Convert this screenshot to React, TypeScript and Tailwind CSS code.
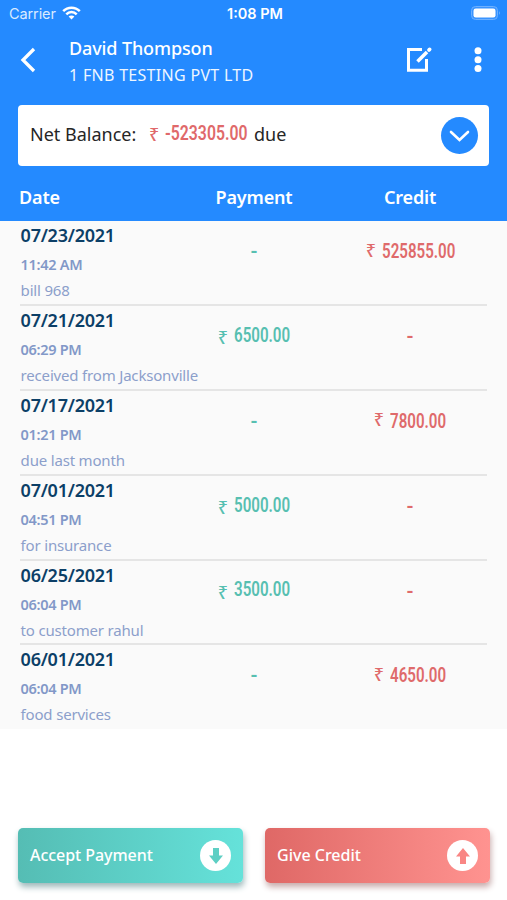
interface Entry {
  date: string;
  time: string;
  note: string;
  payment?: string;
  credit?: string;
}

const entries: Entry[] = [
  { date: '07/23/2021', time: '11:42 AM', note: 'bill 968', credit: '525855.00' },
  { date: '07/21/2021', time: '06:29 PM', note: 'received from Jacksonville', payment: '6500.00' },
  { date: '07/17/2021', time: '01:21 PM', note: 'due last month', credit: '7800.00' },
  { date: '07/01/2021', time: '04:51 PM', note: 'for insurance', payment: '5000.00' },
  { date: '06/25/2021', time: '06:04 PM', note: 'to customer rahul', payment: '3500.00' },
  { date: '06/01/2021', time: '06:04 PM', note: 'food services', credit: '4650.00' },
];

/**
 * Carrier, clock and battery
 */
function StatusBar() {
  return (
    <div className="grid h-7 grid-cols-3 items-center pl-[9px] pr-[6px] font-['Inter',sans-serif] text-[14px] leading-none">
      <div className="flex items-center gap-[6px] text-[#d9eaff]">
        <span className="text-[14.5px] tracking-[-0.1px]">Carrier</span>
        <svg className="mb-[2px] h-[14px] w-[19px]" viewBox="0 0 19 14" fill="none" stroke="#fff" strokeWidth="2.5">
          <path d="M1.2 5.2C5.8 .5 13.2 .5 17.8 5.2" />
          <path d="M4.3 8.3C7.2 5.3 11.8 5.3 14.7 8.3" />
          <path d="M9.5 13.6L6.6 10.5C8.2 9 10.8 9 12.4 10.5Z" fill="#fff" stroke="none" />
        </svg>
      </div>
      <span className="text-center text-[14.5px] font-semibold text-white">1:08 PM</span>
      <svg className="mb-[2px] h-[14px] w-[30px] justify-self-end" viewBox="0 0 30 14">
        <rect x=".5" y=".5" width="26" height="13" rx="4" fill="#3a94ff" stroke="#6db0ff" />
        <rect x="2.5" y="2.5" width="22" height="9" rx="2.3" fill="#fff" />
        <path d="M28 5Q29.8 7 28 9Z" fill="#7ab8ff" />
      </svg>
    </div>
  );
}

function TitleBar() {
  return (
    <div className="flex h-[77px] items-start text-white">
      <svg className="ml-[20px] mt-[19px] h-[26px] w-[16px]" viewBox="0 0 16 26" fill="none" stroke="currentColor" strokeWidth="3.3">
        <path d="M14 2L3 13L14 24" />
      </svg>
      <div className="ml-[33px] mt-[8px] flex-1 whitespace-nowrap">
        <div className="text-[18px] font-medium leading-[25px] tracking-[-0.12px]">David Thompson</div>
        <div className="pt-[3px] text-[16px] leading-[22px] tracking-[0.3px] text-[#eef6ff]">1 FNB TESTING PVT LTD</div>
      </div>
      <svg className="mt-[17px] h-[28px] w-[28px]" viewBox="0 0 28 28" fill="none" stroke="currentColor" strokeWidth="3">
        <path d="M17 4.5H3.5V25.3H21.5V14" />
        <path d="M12.5 16.5L22 7" strokeWidth="3.5" />
        <path d="M24 5L24.6 4.4" strokeWidth="3.8" strokeLinecap="round" />
      </svg>
      <svg className="ml-[41px] mr-[25.5px] mt-[18px] h-[28px] w-[8px]" viewBox="0 0 8 28" fill="currentColor">
        <circle cx="4" cy="4.8" r="3.5" />
        <circle cx="4" cy="13.7" r="3.5" />
        <circle cx="4" cy="22.6" r="3.5" />
      </svg>
    </div>
  );
}

function BalanceCard() {
  return (
    <div className="mx-[18px] flex h-[61px] items-center rounded-[4px] bg-white pl-3 pr-3">
      <span className="mb-[3px] w-[119px] whitespace-nowrap text-[18px] text-[#262626]">Net Balance:</span>
      <span className="mb-[4px] w-[16px] text-[18px] font-medium leading-none text-[#e0696a]">₹</span>
      <span className="mb-[3px] w-[89px] whitespace-nowrap font-['Roboto',sans-serif] text-[19.5px] font-semibold text-[#e0696a]">
        <span className="inline-block origin-left scale-x-[0.81]">-523305.00</span>
      </span>
      <span className="mb-[3px] flex-1 text-[18px] text-[#262626]">due</span>
      <div className="mr-[-1px] flex size-[37px] items-center justify-center rounded-full bg-[#248aff]">
        <svg className="h-[12px] w-[21px]" viewBox="0 0 21 12" fill="none" stroke="#fff" strokeWidth="2.6" strokeLinecap="round">
          <path d="M2 2L10.5 10L19 2" />
        </svg>
      </div>
    </div>
  );
}

interface AmountProps {
  value?: string;
  kind: 'payment' | 'credit';
}

function Amount({ value, kind }: AmountProps) {
  const color = kind === 'payment' ? 'text-[#57bfb1]' : 'text-[#df6a6b]';

  if (!value) {
    return (
      <div className={`flex h-[58px] items-center justify-center ${color}`}>
        <span className="text-[20px] font-semibold leading-none">-</span>
      </div>
    );
  }

  const width = value.length > 7 ? 'w-[72px]' : 'w-[56px]';
  return (
    <div className={`flex h-[60px] items-center justify-center gap-[6px] ${color}`}>
      <span className={kind === 'payment' ? 'mt-[2px] text-[18px] font-medium leading-none' : 'mb-[3px] text-[18px] font-medium leading-none'}>₹</span>
      <span className={`${width} ${kind === 'credit' ? 'mt-px' : 'mb-px'} whitespace-nowrap font-['Roboto',sans-serif] text-[19.5px] font-semibold`}>
        <span className="inline-block origin-left scale-x-[0.775]">{value}</span>
      </span>
    </div>
  );
}

function EntryRow({ entry }: { entry: Entry }) {
  return (
    <div className="mx-5 grid h-[84.9px] grid-cols-[156px_156px_156px] border-b-2 border-[#e5e5e5] last:border-b-0">
      <div className="whitespace-nowrap pl-[0.6px]">
        <div className="pt-[1px] text-[18px] font-semibold leading-[26px] tracking-[-0.25px] text-[#0c3f67]">{entry.date}</div>
        <div className="pt-[5px] text-[14.5px] font-semibold leading-[22px] tracking-[-0.3px] text-[#8298c8]">{entry.time}</div>
        <div className="pt-[3px] text-[15px] leading-[24px] tracking-[-0.18px] text-[#8c9fcb]">{entry.note}</div>
      </div>
      <Amount value={entry.payment} kind="payment" />
      <Amount value={entry.credit} kind="credit" />
    </div>
  );
}

function ArrowBadge({ up = false }: { up?: boolean }) {
  return (
    <span className="flex size-[31px] items-center justify-center rounded-full bg-white">
      <svg className={up ? 'h-[18px] w-[14px] rotate-180 text-[#f98684]' : 'h-[18px] w-[14px] text-[#5ecfc4]'} viewBox="0 0 14 18" fill="currentColor">
        <path d="M4 1H10V8.5H14L7 17L0 8.5H4Z" />
      </svg>
    </span>
  );
}

export default function App() {
  return (
    <div className="flex h-[900px] w-[507px] flex-col overflow-hidden bg-white font-['Noto_Sans',sans-serif]">
      <header className="h-[220.5px] shrink-0 bg-[#248aff]">
        <StatusBar />
        <TitleBar />
        <BalanceCard />
        <div className="grid h-[54px] grid-cols-[156px_156px_156px] items-center px-5 pt-[8px] text-[18px] font-semibold tracking-[-0.15px] text-white">
          <span className="ml-[-1px]">Date</span>
          <span className="text-center">Payment</span>
          <span className="text-center">Credit</span>
        </div>
      </header>

      <main className="h-[508px] shrink-0 overflow-hidden bg-[#fafafa] pt-[0.5px]">
        {entries.map((entry) => (
          <EntryRow key={entry.date} entry={entry} />
        ))}
      </main>

      <footer className="mt-auto flex gap-[22px] pb-[17px] pl-[18px] text-[16px] font-medium text-white">
        <button className="flex h-[55px] w-[225px] items-center justify-between rounded-[5px] bg-linear-to-r from-[#55bdb4] to-[#65e2da] pl-3 pr-3 shadow-[1px_4px_6px_#9db8ba]">
          <span className="mb-[2px] tracking-[-0.05px]">Accept Payment</span>
          <ArrowBadge />
        </button>
        <button className="flex h-[55px] w-[225px] items-center justify-between rounded-[5px] bg-linear-to-r from-[#df6866] to-[#ff9390] pl-3 pr-3 shadow-[1px_4px_6px_#c8abab]">
          <span className="mb-[2px]">Give Credit</span>
          <ArrowBadge up />
        </button>
      </footer>
    </div>
  );
}
